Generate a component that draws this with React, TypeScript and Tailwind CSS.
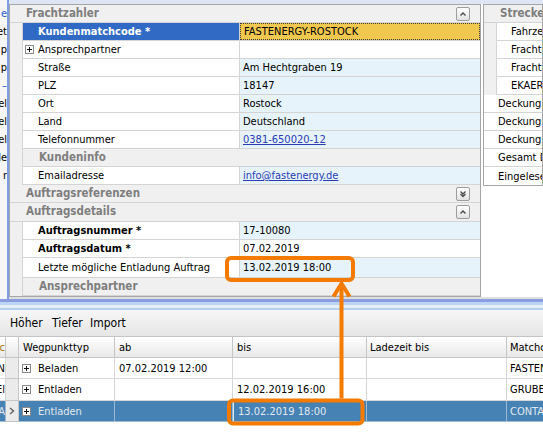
import React from 'react'

const font = "font-['DejaVu_Sans_Condensed','DejaVu_Sans',sans-serif]"

function PlusBox({ className = '' }: { className?: string }) {
  return (
    <svg width="9" height="9" viewBox="0 0 9 9" className={className}>
      <rect x="0.5" y="0.5" width="8" height="8" fill="#fff" stroke="#8a8a8a" />
      <path d="M2 4.5h5M4.5 2v5" stroke="#111" strokeWidth="1" />
    </svg>
  )
}

function ToggleButton({ down }: { down?: boolean }) {
  return (
    <div className="w-[14px] h-[14px] rounded-[2px] border border-[#9c9c9c] bg-linear-to-b from-white to-[#e2e2e2] flex items-center justify-center">
      <svg width="8" height="8" viewBox="0 0 8 8">
        {down ? (
          <path d="M1.5 1.5l2.5 2.5 2.5-2.5M1.5 4l2.5 2.5 2.5-2.5" fill="none" stroke="#4a4a4a" strokeWidth="1.3" />
        ) : (
          <path d="M1.5 5.5l2.5-2.5 2.5 2.5" fill="none" stroke="#4a4a4a" strokeWidth="1.4" />
        )}
      </svg>
    </div>
  )
}

function GroupRow({
  label,
  level,
  toggle,
  h = 'h-[18px]',
}: {
  label: string
  level: 0 | 1
  toggle?: 'up' | 'down'
  h?: string
}) {
  if (level === 1) {
    return (
      <div className={`flex ${h}`}>
        <div className="w-[12px] shrink-0 bg-[#f0f0f0]" />
        <div className="flex-1 flex items-center pl-[16px] bg-[#f0f0f0] border-l border-b border-[#d4d4d4] font-bold text-[11.5px] text-[#7e7e7e]">
          {label}
        </div>
      </div>
    )
  }
  return (
    <div className={`flex items-center ${h} pl-[16px] pr-[10px] bg-[#f0f0f0] border-b border-[#d4d4d4]`}>
      <span className="flex-1 font-bold text-[11.5px] text-[#7e7e7e]">{label}</span>
      {toggle && <ToggleButton down={toggle === 'down'} />}
    </div>
  )
}

function PropRow({
  label,
  value,
  bold,
  plus,
  white,
  link,
  active,
  h = 'h-[18px]',
}: {
  label: string
  value?: string
  bold?: boolean
  plus?: boolean
  white?: boolean
  link?: boolean
  active?: boolean
  h?: string
}) {
  return (
    <div className={`flex ${h}`}>
      <div className="w-[12px] shrink-0 bg-[#f0f0f0]" />
      <div
        className={`w-[217px] shrink-0 relative flex items-center pl-[15px] border-l border-b border-[#d4d4d4] whitespace-nowrap overflow-hidden ${
          active ? 'bg-[#316ac5] text-white' : 'bg-white text-black'
        } ${bold ? 'font-bold' : ''}`}
      >
        {plus && <PlusBox className="absolute left-[2px] top-[4px]" />}
        {label}
      </div>
      <div
        className={`flex-1 flex border-l border-b border-[#d4d4d4] ${
          active ? 'bg-[#f0c850]' : white ? 'bg-white' : 'bg-[#e6f3fa]'
        }`}
      >
        <div
          className={`flex-1 flex items-center pl-[3px] whitespace-nowrap ${
            active ? 'border border-dotted border-[#3a3a3a] pl-[2px]' : ''
          } ${link ? 'text-[#2a3db4] underline' : 'text-black'}`}
        >
          {value}
        </div>
      </div>
    </div>
  )
}

function MainPanel() {
  return (
    <div className="w-[472px] shrink-0 border border-[#a6a6a6] bg-white flex flex-col">
      <GroupRow label="Frachtzahler" level={0} toggle="up" />
      <PropRow label="Kundenmatchcode *" value="FASTENERGY-ROSTOCK" bold active />
      <PropRow label="Ansprechpartner" plus white />
      <PropRow label="Straße" value="Am Hechtgraben 19" />
      <PropRow label="PLZ" value="18147" />
      <PropRow label="Ort" value="Rostock" />
      <PropRow label="Land" value="Deutschland" />
      <PropRow label="Telefonnummer" value="0381-650020-12" link />
      <GroupRow label="Kundeninfo" level={1} />
      <PropRow label="Emailadresse" value="info@fastenergy.de" link />
      <GroupRow label="Auftragsreferenzen" level={0} toggle="down" />
      <GroupRow label="Auftragsdetails" level={0} toggle="up" h="h-[19px]" />
      <PropRow label="Auftragsnummer *" value="17-10080" bold />
      <PropRow label="Auftragsdatum *" value="07.02.2019" bold white />
      <PropRow label="Letzte mögliche Entladung Auftrag" value="13.02.2019 18:00" h="h-[20px]" />
      <GroupRow label="Ansprechpartner" level={1} />
    </div>
  )
}

function RightPanel() {
  const sub = ['Fahrzeug', 'Frachtgut', 'Frachtpreis', 'EKAER-Nummer']
  const main = ['Deckungsbeitrag', 'Deckungsbeitrag %', 'Deckungsbeitrag Plan', 'Gesamt Distanz', 'Eingelesene Daten']
  return (
    <div className="flex-1 min-w-0 border border-[#a6a6a6] bg-white flex flex-col overflow-hidden">
      <div className="h-[18px] flex items-center pl-[16px] bg-[#f0f0f0] border-b border-[#d4d4d4] font-bold text-[11.5px] text-[#7e7e7e] whitespace-nowrap">
        Streckendaten
      </div>
      {sub.map(s => (
        <div key={s} className="h-[18px] flex">
          <div className="w-[12px] shrink-0 bg-[#f0f0f0]" />
          <div className="flex-1 flex items-center pl-[14px] border-l border-b border-[#d4d4d4] whitespace-nowrap">
            {s}
          </div>
        </div>
      ))}
      {main.map(s => (
        <div key={s} className="h-[18px] flex items-center pl-[14px] border-b border-[#d4d4d4] whitespace-nowrap last:border-b-0">
          {s}
        </div>
      ))}
    </div>
  )
}

const leftBits = ['e', 'et', 'p', 'p', '–', 'el', 'el', 'el', 'de', 'r']

function LeftStrip() {
  return (
    <div className="w-[7px] shrink-0 overflow-hidden flex flex-col pt-[4px] bg-[#f6f6f6]">
      {leftBits.map((t, i) => (
        <div
          key={i}
          className={`h-[18px] shrink-0 flex items-center justify-end whitespace-nowrap ${
            i === 0 || i === 4 ? 'text-[#2f55c8]' : 'text-black'
          }`}
        >
          {t}
        </div>
      ))}
    </div>
  )
}

const gridRows = [
  { typ: 'Beladen', ab: '07.02.2019 12:00', bis: '', match: 'FASTENERGY-ROSTOCK', frag: 'N', h: 'h-[21px]' },
  { typ: 'Entladen', ab: '', bis: '12.02.2019 16:00', match: 'GRUBER', frag: 'El', h: 'h-[22px]' },
  { typ: 'Entladen', ab: '', bis: '13.02.2019 18:00', match: 'CONTAINER', frag: 'A', h: 'h-[21px]', selected: true },
]

function Grid() {
  const head = 'h-[21px] flex items-center border-r border-b border-[#c6c6c6] bg-linear-to-b from-white to-[#e8e8e8] whitespace-nowrap'
  return (
    <div className="flex flex-col">
      <div className="flex">
        <div className={`${head} w-[6px] overflow-hidden justify-end text-[#a07a10]`}>c</div>
        <div className={`${head} w-[13px]`} />
        <div className={`${head} w-[96px] pl-[4px]`}>Wegpunkttyp</div>
        <div className={`${head} w-[118px] pl-[4px]`}>ab</div>
        <div className={`${head} w-[134px] pl-[4px]`}>bis</div>
        <div className={`${head} w-[140px] pl-[3px]`}>Ladezeit bis</div>
        <div className={`${head} flex-1 min-w-0 overflow-hidden pl-[3px] border-r-0`}>Matchcode</div>
      </div>
      {gridRows.map((r, i) => {
        const sel = !!r.selected
        const cell = `${r.h} flex items-center whitespace-nowrap overflow-hidden border-r border-b ${
          sel ? 'bg-[#4682b4] text-[#e2e8ef] border-[#9cb9d3]' : 'bg-white text-black border-[#d6d6d6]'
        }`
        return (
          <div key={i} className="flex">
            <div className={`${cell} w-[6px] justify-end`}>{r.frag}</div>
            <div className={`${r.h} w-[13px] flex items-center justify-center border-r border-b border-[#c6c6c6] bg-[#ebebeb]`}>
              {sel && (
                <svg width="6" height="8" viewBox="0 0 6 8">
                  <path d="M1 1l3.5 3-3.5 3" fill="none" stroke="#666" strokeWidth="1.5" />
                </svg>
              )}
            </div>
            <div className={`${cell} w-[96px] pl-[3px] gap-[7px]`}>
              <PlusBox />
              {r.typ}
            </div>
            <div className={`${cell} w-[118px] pl-[4px]`}>{r.ab}</div>
            <div className={`${cell} w-[134px] pl-[4px] ${sel ? 'border-l border-l-[#dfe8f1] pl-[3px]' : ''}`}>{r.bis}</div>
            <div className={`${cell} w-[140px] pl-[3px]`} />
            <div className={`${cell} flex-1 min-w-0 pl-[3px] border-r-0`}>{r.match}</div>
          </div>
        )
      })}
    </div>
  )
}

function Annotation() {
  const c = '#f47a00'
  return (
    <svg className="absolute inset-0 pointer-events-none" width="543" height="441" viewBox="0 0 543 441">
      <rect x="227" y="258" width="126" height="22" rx="4" fill="none" stroke={c} strokeWidth="4" />
      <rect x="229" y="400.5" width="133.5" height="23" rx="4" fill="none" stroke={c} strokeWidth="4" />
      <path d="M341.5 286V398.5" stroke={c} strokeWidth="4" />
      <path d="M333.5 296.5L341.5 283.5L349.5 296.5" fill="none" stroke={c} strokeWidth="4" strokeLinejoin="miter" />
    </svg>
  )
}

export default function App() {
  return (
    <div className={`${font} text-[11px] leading-none w-[543px] h-[441px] overflow-hidden relative bg-white text-black`}>
      <div className="flex h-[299px] bg-white">
        <LeftStrip />
        <div className="w-[2px] shrink-0 bg-[#7f9de3]" />
        <div className="flex-1 min-w-0 flex flex-col">
          <div className="h-[4px] shrink-0 bg-[#dde6f2]" />
          <div className="flex flex-1 items-start min-h-0">
            <MainPanel />
            <div className="w-[2px] shrink-0" />
            <RightPanel />
          </div>
          <div className="h-[2px] shrink-0 bg-[#dedede]" />
        </div>
      </div>

      <div className="h-[3px] bg-[#8b9de1]" />
      <div className="h-[3px] bg-[#bcd5f6]" />
      <div className="h-[3px] bg-[#e6eefb]" />
      <div className="h-[2px] bg-[#b6d0f2]" />

      <div className="h-[27px] flex items-center pl-[10px] text-[12px] bg-linear-to-b from-[#f6f6f6] to-[#e6e6e6] border-b border-[#c4c4c4]">
        <span className="w-[42px]">Höher</span>
        <span className="w-[38px]">Tiefer</span>
        <span>Import</span>
      </div>

      <Grid />
      <Annotation />
    </div>
  )
}
